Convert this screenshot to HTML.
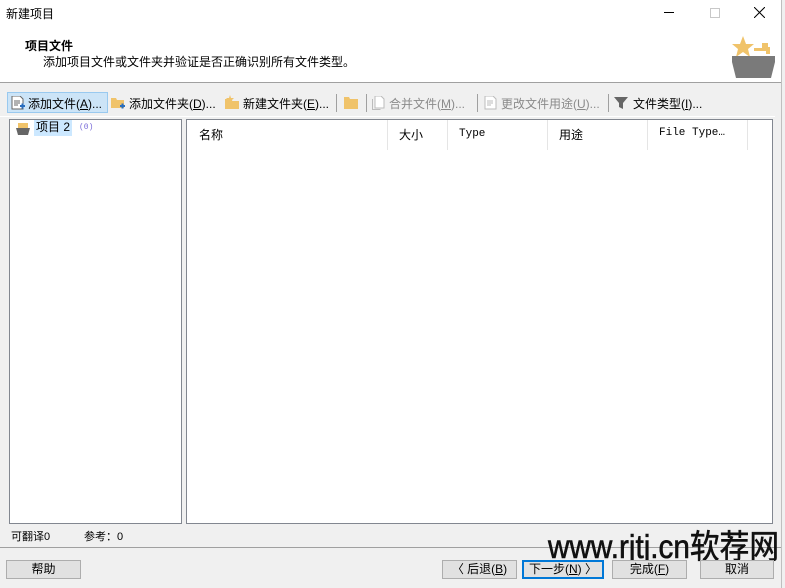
<!DOCTYPE html>
<html><head><meta charset="utf-8"><style>
*{margin:0;padding:0;box-sizing:border-box}
body{width:785px;height:588px;background:#f0f0f0;font-family:"Liberation Sans","Noto Sans CJK SC",sans-serif;font-size:12px;color:#000;position:relative;overflow:hidden}
.a{position:absolute;white-space:nowrap}
.mono{font-family:"Liberation Mono","Noto Sans CJK SC",monospace;font-size:11px}
.btn{position:absolute;top:560px;height:19px;border:1px solid #adadad;background:#e1e1e1;text-align:center;line-height:17px;font-size:12px}
.sep{position:absolute;top:94px;width:1px;height:18px;background:#a0a0a0}
.dis{color:#8a8a8a}
.col{position:absolute;top:120px;width:1px;height:30px;background:#e5e5e5}
</style></head><body>
<div class="a" style="left:0;top:0;width:781px;height:82px;background:#fff"></div>
<div class="a" style="left:0;top:82px;width:781px;height:1px;background:#a0a0a0"></div>
<div class="a" style="left:781px;top:0;width:4px;height:588px;background:#f0f0f0;border-left:1px solid #bfbfbf"></div>
<div class="a" style="left:6px;top:5px;font-size:12px">新建项目</div>
<div class="a" style="left:664px;top:12px;width:10px;height:1px;background:#000"></div>
<div class="a" style="left:710px;top:8px;width:10px;height:10px;border:1px solid #c8c8c8"></div>
<svg class="a" style="left:754px;top:7px" width="11" height="11"><path d="M0 0L11 11M11 0L0 11" stroke="#000" stroke-width="1"/></svg>
<div class="a" style="left:25px;top:37px;font-weight:bold;font-size:12px">项目文件</div>
<div class="a" style="left:43px;top:53px;font-size:12px">添加项目文件或文件夹并验证是否正确识别所有文件类型。</div>
<svg class="a" style="left:732px;top:36px" width="45" height="43"><polygon points="11,0 14,8 22,8 16,13 18,21 11,16 4,21 6,13 0,8 8,8" fill="#f0c36a"/><path d="M22 12h8v-5h6v4h2v7h-4v-3h-12z" fill="#f0c36a"/><path d="M0 20h43v6l-4 16h-35l-4-16z" fill="#7a7a7a"/></svg>
<div class="a" style="left:7px;top:92px;width:101px;height:21px;background:#cce4f7;border:1px solid #99c9ef"></div>
<svg class="a" style="left:11px;top:96px" width="14" height="14"><path d="M1 0h8l3 3v10h-11z" fill="#fff" stroke="#666"/><path d="M3 5h6M3 7h6M3 9h4" stroke="#666"/><path d="M9 10h5M11.5 7.5v5" stroke="#2a6ebf" stroke-width="2"/></svg>
<div class="a" style="left:28px;top:95px">添加文件(<u>A</u>)...</div>
<svg class="a" style="left:111px;top:96px" width="15" height="14"><path d="M0 2h5l1 2h7v8h-13z" fill="#f0c36a"/><path d="M9 10h5M11.5 7.5v5" stroke="#2a6ebf" stroke-width="2"/></svg>
<div class="a" style="left:129px;top:95px">添加文件夹(<u>D</u>)...</div>
<svg class="a" style="left:225px;top:95px" width="15" height="15"><path d="M0 4h5l1 2h8v8h-14z" fill="#f0c36a"/><polygon points="5,0 6,3 9,3 7,5 8,8 5,6 2,8 3,5 1,3 4,3" fill="#f0c36a"/></svg>
<div class="a" style="left:243px;top:95px">新建文件夹(<u>E</u>)...</div>
<div class="sep" style="left:336px"></div>
<svg class="a" style="left:344px;top:96px" width="15" height="14"><path d="M0 1h5l1 2h8v10h-14z" fill="#f0c36a"/></svg>
<div class="sep" style="left:366px"></div>
<svg class="a" style="left:372px;top:96px" width="13" height="14"><path d="M3 0h6l3 3v9h-9z" fill="#fff" stroke="#bbb"/><path d="M0.5 3v10.5h8" fill="none" stroke="#bbb"/></svg>
<div class="a dis" style="left:389px;top:95px">合并文件(<u>M</u>)...</div>
<div class="sep" style="left:477px"></div>
<svg class="a" style="left:484px;top:96px" width="14" height="14"><path d="M1 0h8l3 3v10h-11z" fill="#fff" stroke="#bbb"/><path d="M3 5h6M3 7h6M3 9h4" stroke="#bbb"/></svg>
<div class="a dis" style="left:501px;top:95px">更改文件用途(<u>U</u>)...</div>
<div class="sep" style="left:608px"></div>
<svg class="a" style="left:614px;top:96px" width="14" height="14"><path d="M0 1h14l-5 6v6l-4-2v-4z" fill="#666"/></svg>
<div class="a" style="left:633px;top:95px">文件类型(<u>I</u>)...</div>
<div class="a" style="left:0;top:116px;width:775px;height:1px;background:#fff"></div>
<div class="a" style="left:9px;top:119px;width:173px;height:405px;background:#fff;border:1px solid #828790"></div>
<svg class="a" style="left:15px;top:122px" width="16" height="14"><rect x="3" y="1" width="10" height="5" fill="#f0c36a"/><path d="M1 6h14l-2 7h-10z" fill="#666"/></svg>
<div class="a" style="left:34px;top:120px;height:16px;padding:0 2px;background:#cce8ff;line-height:15px">项目 2</div>
<div class="a mono" style="left:79px;top:123px;font-size:8px;color:#7a6cd8">(0)</div>
<div class="a" style="left:186px;top:119px;width:587px;height:405px;background:#fff;border:1px solid #828790"></div>
<div class="a" style="left:199px;top:126px">名称</div>
<div class="col" style="left:387px"></div>
<div class="a" style="left:399px;top:126px">大小</div>
<div class="col" style="left:447px"></div>
<div class="a mono" style="left:459px;top:128px">Type</div>
<div class="col" style="left:547px"></div>
<div class="a" style="left:559px;top:126px">用途</div>
<div class="col" style="left:647px"></div>
<div class="a mono" style="left:659px;top:127px">File Type…</div>
<div class="col" style="left:747px"></div>
<div class="a" style="left:11px;top:528px;font-size:11px">可翻译0</div>
<div class="a" style="left:84px;top:528px;font-size:11px">参考：0</div>
<div class="a" style="left:0;top:547px;width:781px;height:1px;background:#a0a0a0"></div>
<div class="a" style="left:548px;top:520px;font-size:33px;color:#111;transform:scaleX(0.9);transform-origin:0 0;-webkit-text-stroke:0.6px #111">www.rjtj.cn软荐网</div>
<div class="btn" style="left:6px;width:75px">帮助</div>
<div class="btn" style="left:442px;width:75px">〈 后退(<u>B</u>)</div>
<div class="btn" style="left:522px;width:82px;border:2px solid #0078d7;line-height:15px">下一步(<u>N</u>) 〉</div>
<div class="btn" style="left:612px;width:75px">完成(<u>F</u>)</div>
<div class="btn" style="left:700px;width:74px">取消</div>
</body></html>
